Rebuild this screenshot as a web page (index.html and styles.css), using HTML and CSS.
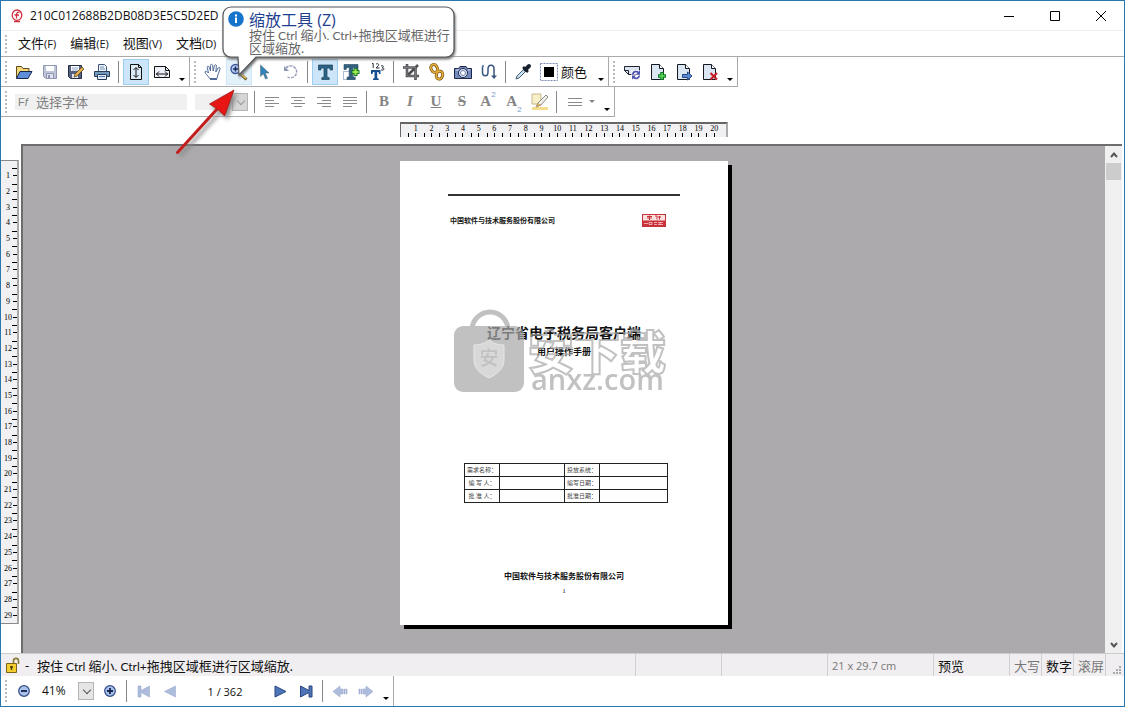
FILE: index.html
```html
<!DOCTYPE html>
<html lang="zh-CN">
<head>
<meta charset="utf-8">
<title>210C012688B2DB08D3E5C5D2ED</title>
<link rel="stylesheet" href="styles.css">
</head>
<body>
<div class="window">
  <header class="titlebar">
    <svg class="app-icon" viewBox="0 0 14 14"><ellipse cx="7" cy="6.200" rx="4.800" ry="5.200" fill="none" stroke="#cf3040" stroke-width="1.300"/><path d="M9.500 3.500C7.500 2.500 6.500 4 6.500 6V9.500M4.500 6H9M4 12.500h6" fill="none" stroke="#cf3040" stroke-width="1.300"/></svg>
    <h1 class="title">210C012688B2DB08D3E5C5D2ED</h1>
    <div class="win-buttons">
      <button class="win-btn" aria-label="最小化"><svg viewBox="0 0 12 12"><path d="M1 6.500h10"/></svg></button>
      <button class="win-btn" aria-label="最大化"><svg viewBox="0 0 12 12"><path d="M1.500 1.500h9v9h-9z"/></svg></button>
      <button class="win-btn" aria-label="关闭"><svg viewBox="0 0 12 12"><path d="M1 1l10 10M11 1L1 11"/></svg></button>
    </div>
  </header>

  <nav class="menubar">
    <span class="grip"></span>
    <button class="menu">文件<small>(F)</small></button>
    <button class="menu">编辑<small>(E)</small></button>
    <button class="menu">视图<small>(V)</small></button>
    <button class="menu">文档<small>(D)</small></button>
  </nav>

  <div class="toolrow">
    <div class="toolbar">
      <span class="grip"></span>
      <button class="tool" aria-label="打开"><svg viewBox="0 0 18 18"><path d="M1.500 15V3.500h5l1.500 2h6V8" fill="#f5d978" stroke="#5b4a1c"/><path d="M1.500 15.500L5 8.500h12l-4 7z" fill="#5f8fd8" stroke="#17264f"/></svg></button>
      <button class="tool" aria-label="保存"><svg viewBox="0 0 18 18"><path d="M2.500 2.500h13v13h-11l-2-2z" fill="#bfc4d8" stroke="#9298b2"/><path d="M5 3h8v5H5z" fill="#fff"/><path d="M5.500 10.500h7v5h-7z" fill="#dfe2ec" stroke="#9298b2"/><path d="M7 12h2v3H7z" fill="#8c93ae"/></svg></button>
      <button class="tool" aria-label="另存为"><svg viewBox="0 0 18 18"><path d="M1.500 2.500h13v13h-11l-2-2z" fill="#56617f" stroke="#252d49"/><path d="M4 3h8v5H4z" fill="#fff"/><path d="M5 5h6M5 7h6" stroke="#8fa1c9"/><path d="M5 11h6v4H5z" fill="#e4e7ef"/><path d="M7 14l1-3 7-7 2 2-7 7z" fill="#e2b04c" stroke="#5f4520" stroke-width=".8"/></svg></button>
      <button class="tool" aria-label="打印"><svg viewBox="0 0 18 18"><path d="M5.500 8V1.500h6l2 2V8" fill="#eef4fb" stroke="#3c5578"/><path d="M7 4h4M7 6h5" stroke="#7394bd"/><path d="M1.500 8.500h15v5h-15z" fill="#7798bd" stroke="#253b5a"/><path d="M4.500 11.500h9v5h-9z" fill="#e5eef8" stroke="#253b5a"/><path d="M6 13.500h6" stroke="#4a77ad"/></svg></button>
      <span class="sep"></span>
      <button class="tool active" aria-label="适合高度"><svg viewBox="0 0 18 18"><path d="M3.500 1.500h8l3 3v12h-11z" fill="#dceaf8" stroke="#111"/><path d="M11.500 1.500v3h3M9 5v9M6.500 7L9 4.500 11.500 7M6.500 12L9 14.500l2.500-2.500" fill="none" stroke="#111"/></svg></button>
      <button class="tool" aria-label="适合宽度"><svg viewBox="0 0 18 18"><path d="M1.500 3.500h11l4 4v7h-15z" fill="#eef2f8" stroke="#111"/><path d="M12.500 3.500v4h4M3 11h12M6 8.500L3.500 11 6 13.500M12 8.500l2.500 2.500-2.500 2.500" fill="none" stroke="#111"/></svg></button>
      <button class="more" aria-label="更多"></button>
    </div>
    <div class="toolbar">
      <span class="grip"></span>
      <button class="tool" aria-label="手形工具"><svg viewBox="0 0 18 18"><path d="M5.500 15.500C4 12.500 1 10.500 1 9c0-1.500 2-.8 3.500 1L3.200 4.500c-.2-1.600 1.600-1.800 2-.3L6.500 8V2.500c0-1.600 2-1.600 2.200 0L9.200 8l1.200-5.300c.4-1.500 2.300-1.100 2 .5L11.800 9l2.300-4c.9-1.300 2.400-.5 1.900.9L13.500 13l-.5 2.500z" fill="#fff" stroke="#526b9b"/><path d="M6 16.500h7" stroke="#526b9b"/></svg></button>
      <button class="tool hover" aria-label="缩放工具"><svg viewBox="0 0 18 18"><circle cx="5.500" cy="6" r="4.500" fill="#b6cdf2" stroke="#3b5698" stroke-width="1.400"/><path d="M3 6h5M5.500 3.500v5" stroke="#152c63" stroke-width="1.500"/><path d="M9.500 10l7 6.500" stroke="#695527" stroke-width="3"/><path d="M10 10l6 5.500" stroke="#efc85b" stroke-width="1.500"/></svg></button>
      <button class="tool" aria-label="选择"><svg viewBox="0 0 18 18"><path d="M4.500 2v11.500l2.800-2.800 2.200 5.300 2-.8-2.300-5.200H13z" fill="#2f83b8" stroke="#60717c" stroke-width=".6"/></svg></button>
      <button class="tool" aria-label="旋转"><svg viewBox="0 0 18 18"><path d="M4 5a6 6 0 1 1 1.500 9" fill="none" stroke="#8e98b4" stroke-width="1.400" stroke-dasharray="3 1"/><path d="M2 3v5h5z" fill="#8e98b4"/></svg></button>
      <span class="sep"></span>
      <button class="tool active" aria-label="编辑文字"><svg viewBox="0 0 18 18"><path d="M2.500 2h14v5h-2.200l-.6-2H11v9l2.200.8V16.500H5.800v-1.700L8 14V5H5.300l-.6 2H2.500z" fill="#2c6587" stroke="#1d3e58" stroke-width=".7"/></svg></button>
      <button class="tool" aria-label="添加文字"><svg viewBox="0 0 18 18"><path d="M1.500 8.500h12v8h-12z" fill="none" stroke="#6079ad" stroke-dasharray="1 1"/><path d="M2 1.500h14v5h-2l-.7-2h-2.500v9l2.200 1v2H5v-2l2.200-1v-9H4.800l-.7 2H2z" fill="#315f80" stroke="#24465d" stroke-width=".6"/><path d="M13.500 5v8M9.500 9h8" stroke="#18752c" stroke-width="4"/><path d="M13.500 6v6M10.500 9h6" stroke="#9bea4d" stroke-width="2"/></svg></button>
      <button class="tool" aria-label="文字编号"><svg viewBox="0 0 18 18"><path d="M4 .5h1.200V5M8 1.200c2-1.500 3.500.3 2 1.800L8 5h3.500M13 3c3-1 3 1.500 1 1.800 3 .2 2.500 3.200-1 2" fill="none" stroke="#292d3d" stroke-width="1"/><path d="M3 7h9.500v4H11l-.5-2H9.200v6l1.500.7V17H5v-1.300l1.500-.7V9H5l-.5 2H3z" fill="#174f91"/></svg></button>
      <span class="sep"></span>
      <button class="tool" aria-label="裁剪"><svg viewBox="0 0 18 18"><path d="M5 1v12h12M1 4.500h12.500V17M5 13L16 2" fill="none" stroke="#504f53" stroke-width="2.600"/><path d="M5 2v11h11M2 4.500h11.500V16" fill="none" stroke="#858589" stroke-width=".8"/></svg></button>
      <button class="tool" aria-label="链接"><svg viewBox="0 0 18 18"><rect x="3" y="1.500" width="6" height="8" rx="3" transform="rotate(-25 6 5)" fill="none" stroke="#795313" stroke-width="3"/><rect x="8.500" y="8" width="6" height="8" rx="3" transform="rotate(15 11 12)" fill="none" stroke="#795313" stroke-width="3"/><rect x="3" y="1.500" width="6" height="8" rx="3" transform="rotate(-25 6 5)" fill="none" stroke="#e2ac39" stroke-width="1.600"/><rect x="8.500" y="8" width="6" height="8" rx="3" transform="rotate(15 11 12)" fill="none" stroke="#e2ac39" stroke-width="1.600"/></svg></button>
      <button class="tool" aria-label="快照"><svg viewBox="0 0 18 18"><path d="M.5 5.500h4l1.500-2h6l1.500 2h4v10H.5z" fill="#7489bd" stroke="#1d2749"/><path d="M2 7h3M14 7h2" stroke="#dbe4f8"/><circle cx="9" cy="10" r="4.500" fill="#e5edf8" stroke="#1d2749"/><circle cx="9" cy="10" r="2.500" fill="#fff" stroke="#687cac"/></svg></button>
      <button class="tool" aria-label="曲线"><svg viewBox="0 0 18 18"><path d="M2.500 3v6c0 5 5.500 5 5.500 0V6c0-5 6-5 6 0v8" fill="none" stroke="#37547f" stroke-width="1.500"/><path d="M11 12.500h6L14 16z" fill="#37547f"/><path d="M2 2h2v2H2z" fill="#7894bd"/></svg></button>
      <span class="sep"></span>
      <button class="tool" aria-label="吸管"><svg viewBox="0 0 18 18"><path d="M2 16l1-3 7-7 2 2-7 7z" fill="#c7e2f4" stroke="#495d70"/><path d="M9 4l5 5" stroke="#17202d" stroke-width="2.500"/><path d="M11.500 6.500L15 3" stroke="#17202d" stroke-width="4" stroke-linecap="round"/></svg></button>
      <button class="color"><svg viewBox="0 0 18 18"><path d="M.5.500h17v17H.5z" fill="none" stroke="#788db1" stroke-dasharray="2 1"/><path d="M4 4h10v10H4z"/></svg>颜色</button>
      <button class="more" aria-label="更多"></button>
    </div>
    <div class="toolbar">
      <span class="grip"></span>
      <button class="tool" aria-label="旋转页面"><svg viewBox="0 0 18 18"><path d="M1.500 3.500h15v8h-11l-4-4z" fill="#dde4f1" stroke="#20242f"/><path d="M1.500 7.500h4v4" fill="none" stroke="#20242f"/><path d="M8 7h10v10H8z" fill="#fff" fill-opacity=".6"/><path d="M9.500 11.500c1-3.500 4-3.500 6-2M16.500 12.500c-1 3.500-4 3.500-6 2" fill="none" stroke="#4c50af" stroke-width="1.600"/><path d="M17 7.500v4h-4zM9 16.500v-4h4z" fill="#4c50af"/></svg></button>
      <button class="tool" aria-label="插入页面"><svg viewBox="0 0 18 18"><path d="M2.500 1.500h8l4 4v11h-12z" fill="#dbe6f5" stroke="#15181f"/><path d="M10.500 1.500v4h4" fill="#fff" stroke="#15181f"/><path d="M13 9v8M9 13h8" stroke="#137727" stroke-width="3.500"/><path d="M13 10v6M10 13h6" stroke="#55dc57" stroke-width="1.500"/></svg></button>
      <button class="tool" aria-label="提取页面"><svg viewBox="0 0 18 18"><path d="M2.500 1.500h8l4 4v11h-12z" fill="#dbe6f5" stroke="#15181f"/><path d="M10.500 1.500v4h4" fill="#fff" stroke="#15181f"/><path d="M7.500 11.500h5v-2.500l4.500 4-4.500 4v-2.500h-5z" fill="#5b8bd7" stroke="#234782"/></svg></button>
      <button class="tool" aria-label="删除页面"><svg viewBox="0 0 18 18"><path d="M2.500 1.500h8l4 4v11h-12z" fill="#dbe6f5" stroke="#15181f"/><path d="M10.500 1.500v4h4" fill="#fff" stroke="#15181f"/><path d="M9.500 10l6.500 6.500M16 10l-6.500 6.500" stroke="#c7222b" stroke-width="2.200"/></svg></button>
      <button class="more" aria-label="更多"></button>
    </div>
  </div>

  <div class="toolrow">
    <div class="toolbar">
      <span class="grip"></span>
      <label class="font-field"><span class="font-mark">F<i>f</i></span><input type="text" value="选择字体" aria-label="字体" disabled></label>
      <span class="drop size-field"><select aria-label="字号" disabled><option></option></select></span>
      <span class="sep"></span>
      <button class="tool" aria-label="左对齐"><svg class="lines" viewBox="0 0 18 18"><path d="M2 4.500h14M2 7.500h9M2 10.500h14M2 13.500h9"/></svg></button>
      <button class="tool" aria-label="居中"><svg class="lines" viewBox="0 0 18 18"><path d="M2 4.500h14M5 7.500h8M2 10.500h14M5 13.500h8"/></svg></button>
      <button class="tool" aria-label="右对齐"><svg class="lines" viewBox="0 0 18 18"><path d="M2 4.500h14M7 7.500h9M2 10.500h14M7 13.500h9"/></svg></button>
      <button class="tool" aria-label="两端对齐"><svg class="lines" viewBox="0 0 18 18"><path d="M2 4.500h14M2 7.500h14M2 10.500h14M2 13.500h9"/></svg></button>
      <span class="sep"></span>
      <button class="tool letter"><b>B</b></button>
      <button class="tool letter"><i>I</i></button>
      <button class="tool letter"><u>U</u></button>
      <button class="tool letter"><s>S</s></button>
      <button class="tool letter">A<sup>2</sup></button>
      <button class="tool letter">A<sub>2</sub></button>
      <button class="tool" aria-label="荧光笔"><svg viewBox="0 0 18 18"><path d="M1 1h9v6L7 11H1z" fill="#f7efc8" stroke="#c5b78b"/><path d="M1 14h16v3H1z" fill="#f5dc8d"/><path d="M5 14l2-4 8-8 2 2-7 8z" fill="#f2f0ec" stroke="#8f8982"/><path d="M7 10l3 2-5 2z" fill="#d6a656"/></svg></button>
      <span class="sep"></span>
      <button class="line-style" aria-label="线条样式"><svg class="lines" viewBox="0 0 18 18"><path d="M2 5.500h14M2 9.500h14M2 12.500h14"/></svg><span class="tri"></span></button>
      <button class="more" aria-label="更多"></button>
    </div>
  </div>

  <div class="ruler-row">
    <ol class="ruler ruler-h"><li>1</li><li>2</li><li>3</li><li>4</li><li>5</li><li>6</li><li>7</li><li>8</li><li>9</li><li>10</li><li>11</li><li>12</li><li>13</li><li>14</li><li>15</li><li>16</li><li>17</li><li>18</li><li>19</li><li>20</li></ol>
  </div>

  <main class="workspace">
    <div class="ruler-col">
      <ol class="ruler ruler-v"><li>1</li><li>2</li><li>3</li><li>4</li><li>5</li><li>6</li><li>7</li><li>8</li><li>9</li><li>10</li><li>11</li><li>12</li><li>13</li><li>14</li><li>15</li><li>16</li><li>17</li><li>18</li><li>19</li><li>20</li><li>21</li><li>22</li><li>23</li><li>24</li><li>25</li><li>26</li><li>27</li><li>28</li><li>29</li></ol>
    </div>
    <div class="canvas">
      <article class="page">
        <div class="page-head">
          <span>中国软件与技术服务股份有限公司</span>
          <svg class="logo" viewBox="0 0 24 13"><path d="M0 0h24v13H0z" fill="#c9323a"/><path d="M1 1h22v5.500H1z" fill="#f9dfe0"/><path d="M5 2.500h5M5 4h5M7.500 1.500V6M13 2h2v3.500M16 3h3M17.500 2v3.500" stroke="#c9323a" fill="none"/><path d="M2 9.500h4M7 8.500h3v2H7zM12 8.500h3M12 10.500h3M16 8.500h5M16 10.500h5M18 8v3" stroke="#f4c5c7" stroke-width=".8" fill="none"/></svg>
        </div>
        <h2 class="doc-title">辽宁省电子税务局客户端</h2>
        <p class="doc-sub">用户操作手册</p>
        <table class="sheet">
          <colgroup><col class="c-label"><col class="c-first"><col class="c-label"><col></colgroup>
          <tr><th>需求名称：</th><td></td><th>投放系统：</th><td></td></tr>
          <tr><th>编 写 人：</th><td></td><th>编写日期：</th><td></td></tr>
          <tr><th>批 准 人：</th><td></td><th>批准日期：</th><td></td></tr>
        </table>
        <p class="doc-foot">中国软件与技术服务股份有限公司</p>
        <p class="doc-num">1</p>
        <svg class="watermark" viewBox="0 0 216 84">
          <path d="M18 18a18 18 0 0 1 36 0" fill="none" stroke="#a8a8a8" stroke-width="5"/>
          <rect x="0" y="14" width="70" height="66" rx="9" fill="#a8a8a8"/>
          <path d="M35 28c5 4 10 5 15 5v15c0 9-7 14-15 18-8-4-15-9-15-18V33c5 0 10-1 15-5z" fill="#c8c8c8" stroke="#ddd"/>
          <text class="wm-shield" x="35" y="53" text-anchor="middle">安</text>
          <text class="wm-name" x="74" y="57">安下载</text>
          <text class="wm-url" x="77" y="78">anxz.com</text>
        </svg>
      </article>
    </div>
    <div class="scrollbar">
      <button class="scroll-btn" aria-label="向上滚动"><svg viewBox="0 0 8 8"><path d="M1 6l3-3.500L7 6"/></svg></button>
      <span class="thumb"></span>
      <button class="scroll-btn end" aria-label="向下滚动"><svg viewBox="0 0 8 8"><path d="M1 2l3 3.500L7 2"/></svg></button>
    </div>
  </main>

  <div class="statusbar">
    <svg class="lock" viewBox="0 0 16 16"><path d="M8.500 7V4c0-3.500 5-3.500 5 0v3" fill="none" stroke="#8d7a35" stroke-width="1.600"/><path d="M1.500 6.500h10v9h-10z" fill="#f3cd2e" stroke="#7b651b"/><path d="M6.500 9v4M5 10h3" stroke="#4d3c0a" stroke-width="1.400"/></svg>
    <span class="dash">-</span>
    <p class="hint">按住<span class="latin"> Ctrl </span>缩小<span class="latin">. Ctrl+</span>拖拽区域框进行区域缩放.</p>
    <span class="pane w86"></span>
    <span class="pane w106"></span>
    <span class="pane w106 muted dims">21 x 29.7 cm</span>
    <span class="pane w76">预览</span>
    <span class="pane w32 muted">大写</span>
    <span class="pane w32">数字</span>
    <span class="pane w32 muted">滚屏</span>
    <span class="pane resize"><svg viewBox="0 0 8 8"><path d="M6 0h2v2H6zM3 3h2v2H3zM6 3h2v2H6zM0 6h2v2H0zM3 6h2v2H3zM6 6h2v2H6z" fill="#aaa"/></svg></span>
  </div>

  <footer class="toolrow">
    <div class="toolbar bottom">
      <span class="grip"></span>
      <button class="tool" aria-label="缩小"><svg viewBox="0 0 18 18"><circle cx="9" cy="9" r="5.300" fill="#a9c1ed" stroke="#314a84" stroke-width="1.200"/><path d="M6 9h6" stroke="#15254d" stroke-width="1.800"/></svg></button>
      <span class="drop zoom-field"><select aria-label="缩放比例"><option>41%</option></select></span>
      <button class="tool" aria-label="放大"><svg viewBox="0 0 18 18"><circle cx="9" cy="9" r="5.300" fill="#a9c1ed" stroke="#314a84" stroke-width="1.200"/><path d="M6 9h6M9 6v6" stroke="#15254d" stroke-width="1.800"/></svg></button>
      <span class="sep"></span>
      <button class="tool faded" aria-label="第一页"><svg viewBox="0 0 18 18"><path d="M3 4h3v4.500L14.500 4v11L6 10.500V15H3z"/></svg></button>
      <button class="tool faded" aria-label="上一页"><svg viewBox="0 0 18 18"><path d="M14.500 4v11l-11-5.500z"/></svg></button>
      <input class="page-field" type="text" value="1 / 362" aria-label="页码">
      <button class="tool nav" aria-label="下一页"><svg viewBox="0 0 18 18"><path d="M4 4v11l11-5.500z"/></svg></button>
      <button class="tool nav" aria-label="最后一页"><svg viewBox="0 0 18 18"><path d="M3.500 4L12 8.500V4h3v11h-3v-4.500L3.500 15z"/></svg></button>
      <span class="sep"></span>
      <button class="tool faded" aria-label="后退"><svg viewBox="0 0 18 18"><path d="M2 9.500L9 4v3h3v5H9v3zM13 7h1v5h-1zM15 7h1v5h-1z"/></svg></button>
      <button class="tool faded" aria-label="前进"><svg viewBox="0 0 18 18"><path d="M16 9.500L9 4v3H6v5h3v3zM4 7h1v5H4zM2 7h1v5H2z"/></svg></button>
      <button class="more" aria-label="更多"></button>
    </div>
  </footer>

  <aside class="tip" role="tooltip">
    <svg class="tip-shape" viewBox="0 0 236 74"><path d="M9 1H224a8 8 0 0 1 8 8V43a8 8 0 0 1-8 8H34L17 69 16 51H9a8 8 0 0 1-8-8V9a8 8 0 0 1 8-8z" fill="#fff" stroke="#55565b" stroke-width="1.200"/></svg>
    <div class="tip-body">
      <svg class="info" viewBox="0 0 16 16"><circle cx="8" cy="8" r="7.800" fill="#1674cb"/><path d="M7 6.500h2V12H7zM7 3.500h2v2H7z" fill="#fff"/></svg>
      <div>
        <strong class="tip-title">缩放工具 (Z)</strong>
        <p class="tip-text">按住<span class="latin"> Ctrl </span>缩小<span class="latin">. Ctrl+</span>拖拽区域框进行<br>区域缩放.</p>
      </div>
    </div>
  </aside>

  <svg class="pointer" viewBox="0 0 64 72"><path d="M2.500 67.500L43 23" stroke="#c31e1e" stroke-width="3" stroke-linecap="round"/><path d="M59 5L49.500 31 43 24.500 34.500 19z" fill="#e81515" stroke="#9d1b1b" stroke-width=".8"/></svg>
</div>
</body>
</html>
```
FILE: styles.css
```css
* { box-sizing: border-box; }
body {
  margin: 0;
  font-family: "Open Sans", "Noto Sans CJK SC", sans-serif;
  font-size: 13px;
  color: #111;
  background: #fff;
}
h1, h2, p, ol { margin: 0; padding: 0; }
button, input, select {
  margin: 0; padding: 0; border: 0; border-radius: 0;
  background: none; font: inherit; color: inherit;
}
svg { display: block; }

.window {
  position: relative;
  display: flex; flex-direction: column;
  min-height: 100vh;
  border: 1px solid #2878b0;
  background: #fff;
}

.titlebar { display: flex; align-items: center; height: 30px; padding-left: 9px; border-bottom: 1px solid #f0f0f0; }
.app-icon { width: 14px; height: 14px; margin-right: 6px; }
.title { flex: 1; font-size: 12px; font-weight: 400; }
.win-buttons { display: flex; }
.win-btn { display: grid; place-items: center; width: 46px; height: 28px; }
.win-btn svg { width: 12px; height: 12px; fill: none; stroke: #000; }

.menubar { display: flex; align-items: center; height: 26px; border-bottom: 1px solid #aaa; }
.menu { padding: 0 7px; line-height: 20px; }
.menu small { font-size: 11px; }
.grip { align-self: stretch; width: 10px; margin: 3px 0; background: radial-gradient(circle, #bbb 1px, transparent 1px) 3px 0 / 4px 4px repeat-y; }

.toolrow { display: flex; }
.toolbar { display: flex; align-items: center; height: 30px; border-right: 1px solid #aaa; border-bottom: 1px solid #aaa; }
.tool { display: grid; place-items: center; width: 26px; height: 26px; border: 1px solid transparent; }
.tool svg, .color svg, .line-style svg { width: 18px; height: 18px; fill: none; }
.tool.active { background: #cce5f8; border-color: #9fcdf0; }
.tool.hover { background: #e3f1fb; border-color: #cfe6f7; }
.sep { width: 8px; height: 22px; background: linear-gradient(#888, #888) 3px 0 / 1px 100% no-repeat; }
.more { display: flex; align-items: flex-end; justify-content: center; width: 14px; height: 18px; }
.more::after, .tri { content: ""; border: 3px solid transparent; border-top-color: #000; border-bottom: 0; }
.color { display: flex; align-items: center; gap: 3px; width: 58px; padding-left: 4px; }
.color svg path:last-child { fill: #000; }
.lines { stroke: #8a8a8a; }

.font-field { display: flex; align-items: center; width: 172px; height: 16px; margin: 0 8px 0 4px; padding-left: 3px; background: #f0f0f0; color: #808080; }
.font-mark { width: 18px; font: 11px "Liberation Sans", sans-serif; }
.font-field input { flex: 1; min-width: 0; height: 16px; line-height: 16px; color: #808080; }
.drop { position: relative; display: flex; align-items: center; }
.drop select { appearance: none; width: 100%; height: 16px; font-size: 12px; line-height: 16px; color: #111; opacity: 1; }
.drop::after {
  content: ""; position: absolute; right: 0; width: 14px; height: 16px;
  border: 1px solid #b5b5b5; background: #e5e5e5; pointer-events: none;
}
.drop::before {
  content: ""; position: absolute; z-index: 1; right: 4px; top: 4px; width: 5px; height: 5px;
  border: solid #555; border-width: 0 1px 1px 0; transform: rotate(45deg); pointer-events: none;
}
.size-field { width: 53px; margin-right: 3px; background: #f0f0f0; }
.size-field::after { background: #d6d6d6; }
.size-field::before { border-color: #999; }
.letter { font: bold 15px "Liberation Serif", serif; color: #858585; display: flex; align-items: center; justify-content: center; }
.letter sup, .letter sub { font: 8px "Liberation Sans", sans-serif; color: #7c9cc8; }
.letter sup { align-self: flex-start; }
.letter sub { align-self: flex-end; }
.line-style { display: flex; align-items: center; gap: 5px; width: 39px; padding-left: 5px; }
.tri { border-top-color: #888; }

.ruler-row { display: flex; justify-content: center; height: 27px; padding: 5px 19px 0 22px; }
.ruler { display: flex; list-style: none; background: #f1f0f2; font: 8px "Liberation Serif", serif; color: #000; }
.ruler li { flex: 1 1 0; min-width: 0; min-height: 0; text-align: center; line-height: 13px; }
.ruler-h { width: 328px; height: 15px; padding: 0 4px 0 7px; border: solid #666; border-width: 2px 2px 0 1px; border-right-color: #aaa; }
.ruler-h li { background: linear-gradient(#000, #000) 0 9px / 1px 4px no-repeat, linear-gradient(#000, #000) 50% 9px / 1px 4px no-repeat; line-height: 10px; }
.ruler-v { flex-direction: column; width: 18px; height: 464px; padding: 7px 0 0; border: solid #888; border-width: 1px 2px 1px 0; border-right-color: #aaa; }
.ruler-v li {
  display: flex; align-items: center; justify-content: center; padding-right: 2px;
  background: linear-gradient(#000, #000) right 0 / 5px 1px no-repeat, linear-gradient(#000, #000) right 50% / 4px 1px no-repeat;
}

.workspace { display: flex; flex: 1; padding-right: 2px; }
.ruler-col { width: 20px; padding-top: 16px; }
.canvas {
  flex: 1; display: flex; justify-content: center; align-items: flex-start;
  padding: 15px 0 26px;
  background: #acaaac; border: solid #6d6d6d; border-width: 2px 0 0 2px;
}
.scrollbar { display: flex; flex-direction: column; align-items: center; width: 17px; background: #f0f0f0; border-top: 2px solid #6d6d6d; }
.scroll-btn { display: grid; place-items: center; width: 17px; height: 17px; }
.scroll-btn svg { width: 8px; height: 8px; fill: none; stroke: #555; stroke-width: 2; }
.thumb { width: 15px; height: 17px; background: #cdcccd; }
.end { margin-top: auto; }

.page { position: relative; width: 328px; height: 464px; padding: 33px 48px 0; background: #fff; box-shadow: 4px 4px 0 #000; text-align: center; }
.page-head { display: flex; align-items: center; justify-content: space-between; height: 30px; padding: 20px 14px 0 2px; border-top: 2px solid #333; font-size: 7px; line-height: 9px; font-weight: 700; }
.logo { width: 24px; height: 13px; }
.doc-title { margin: 99px -20px 0; font-size: 14px; line-height: 20px; }
.doc-sub { font-size: 9px; line-height: 18px; font-weight: 700; }
.sheet { width: 204px; margin: 102px 16px 0; border-collapse: collapse; table-layout: fixed; }
.sheet th, .sheet td { height: 13px; padding: 0; border: 1px solid #222; }
.sheet th { font-size: 6px; line-height: 10px; font-weight: 400; color: #444; white-space: nowrap; }
.c-label { width: 35px; }
.c-first { width: 65px; }
.doc-foot { margin-top: 67px; font-size: 8px; line-height: 12px; font-weight: 700; }
.doc-num { margin-top: 4px; font: 7px/10px "Liberation Serif", serif; }
.watermark { position: absolute; left: 54px; top: 151px; width: 216px; height: 84px; overflow: visible; opacity: .7; }
.wm-shield { font-size: 19px; fill: #a8a8a8; font-weight: 500; }
.wm-name { font-size: 46px; font-weight: 900; fill: none; stroke: #a8a8a8; stroke-width: 2px; }
.wm-url { font-size: 29px; font-weight: 600; fill: #a8a8a8; }

.statusbar { display: flex; align-items: center; height: 23px; padding-left: 4px; background: #f0eef0; border-top: 1px solid #ccc; }
.lock { width: 16px; height: 16px; }
.dash { width: 16px; padding-left: 4px; }
.hint { flex: 1; white-space: nowrap; }
.hint, .tip-text { font-family: Lato, "Noto Sans CJK SC", sans-serif; }
.latin { font-size: 12px; }
.pane { align-self: stretch; display: flex; align-items: center; padding-left: 4px; border-left: 1px solid #d0d0d0; white-space: nowrap; }
.muted { color: #777; }
.dims { font-size: 11px; }
.w86 { width: 86px; }
.w106 { width: 106px; }
.w76 { width: 76px; }
.w32 { width: 32px; }
.resize { width: 19px; align-items: flex-end; padding: 0 0 2px 7px; }
.resize svg { width: 8px; height: 8px; }

.bottom { border-bottom: 0; }
.zoom-field { width: 60px; padding: 0 3px 0 5px; }
.zoom-field::after { right: 3px; }
.zoom-field::before { right: 7px; }
.page-field { width: 84px; text-align: center; font-size: 11px; }
.nav svg { fill: #4e75b8; stroke: #29477f; }
.faded svg { fill: #aebcdc; stroke: #91a3ca; stroke-width: .5; }

.tip { position: absolute; left: 221px; top: 5px; width: 236px; height: 74px; }
.tip-shape { position: absolute; inset: 0; width: 236px; height: 74px; filter: drop-shadow(1px 2px 1px #777); }
.tip-body { position: relative; display: flex; gap: 5px; padding: 5px 4px 0 6px; }
.info { flex: none; width: 16px; height: 16px; }
.tip-title { display: block; font-size: 16px; font-weight: 400; line-height: 18px; color: #1f3f8f; }
.tip-text { line-height: 13px; color: #666; white-space: nowrap; }
.pointer { position: absolute; left: 174px; top: 84px; width: 64px; height: 72px; fill: none; filter: drop-shadow(3px 3px 2px #888); }
```
